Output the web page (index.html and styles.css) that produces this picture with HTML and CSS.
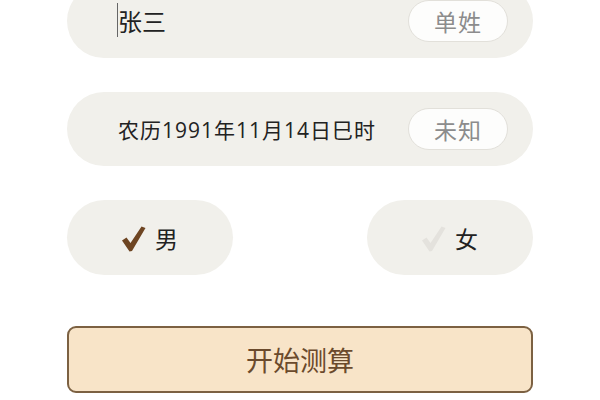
FILE: index.html
```html
<!DOCTYPE html>
<html lang="zh-CN">
<head>
<meta charset="utf-8">
<link rel="stylesheet" href="styles.css">
</head>
<body>
<div class="form">
  <div class="field field-name">
    <div class="field-text name-text"><span class="caret"></span>张三</div>
    <div class="chip">单姓</div>
  </div>
  <div class="field">
    <div class="field-text date-text">农历1991年11月14日巳时</div>
    <div class="chip">未知</div>
  </div>
  <div class="gender-row">
    <div class="gender">
      <svg class="check" viewBox="0 0 24 26" width="24" height="26"><path d="M0 14.5 L4.5 11.5 L8.5 17 L19.5 0.5 L23.5 2 L10 25 L7.5 25.5 Z" fill="#6e4522"/></svg>
      <span class="gender-label">男</span>
    </div>
    <div class="gender">
      <svg class="check" viewBox="0 0 24 26" width="24" height="26"><path d="M0 14.5 L4.5 11.5 L8.5 17 L19.5 0.5 L23.5 2 L10 25 L7.5 25.5 Z" fill="#e4e2dd"/></svg>
      <span class="gender-label">女</span>
    </div>
  </div>
  <div class="submit">开始测算</div>
</div>
</body>
</html>
```
FILE: styles.css
```css
html, body {
  margin: 0;
  padding: 0;
  background: #ffffff;
}
body {
  font-family: "Noto Sans CJK SC", "Noto Sans", sans-serif;
  width: 600px;
  height: 400px;
  overflow: hidden;
}
.form {
  width: 466px;
  margin: -16px 0 0 67px;
  display: flex;
  flex-direction: column;
}
.field {
  height: 74px;
  border-radius: 37px;
  background: #f1f0eb;
  display: flex;
  align-items: center;
  justify-content: space-between;
  padding: 0 25px 0 51px;
  margin-bottom: 34px;
}
.field-text {
  color: #222;
  display: flex;
  align-items: center;
}
.name-text {
  font-size: 24px;
  margin-top: -2px;
}
.caret {
  display: inline-block;
  width: 1px;
  height: 34px;
  background: #666;
  margin-left: -1px;
}
.date-text {
  font-family: "Open Sans", "Noto Sans CJK SC", sans-serif;
  font-size: 21px;
  letter-spacing: 1px;
}
.chip {
  width: 98px;
  height: 40px;
  border: 1px solid #e2e0da;
  border-radius: 21px;
  background: #fdfdfc;
  color: #8c8c8c;
  font-size: 23px;
  display: flex;
  align-items: center;
  justify-content: center;
  letter-spacing: 1px;
}
.gender-row {
  display: flex;
  justify-content: space-between;
  margin-bottom: 51px;
}
.gender {
  width: 166px;
  height: 75px;
  border-radius: 37.5px;
  background: #f1f0eb;
  display: flex;
  align-items: center;
  justify-content: center;
  gap: 9px;
}
.check {
  display: block;
  margin-top: 2px;
}
.gender-label {
  font-size: 23px;
  color: #222;
}
.submit {
  height: 63px;
  border: 2px solid #7c6142;
  border-radius: 9px;
  background: #f8e4c8;
  color: #6b4a2c;
  font-size: 27px;
  display: flex;
  align-items: center;
  justify-content: center;
}
```
